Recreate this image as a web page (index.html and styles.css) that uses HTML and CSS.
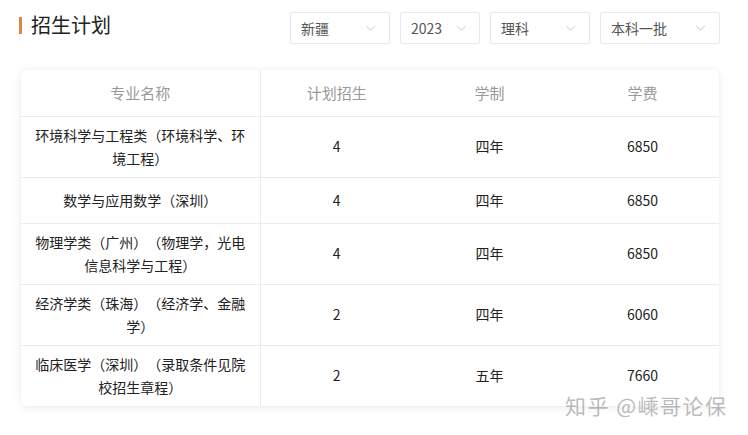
FILE: index.html
```html
<!DOCTYPE html>
<html lang="zh">
<head>
<meta charset="utf-8">
<link rel="stylesheet" href="styles.css">
</head>
<body>
<div class="page">
  <div class="topbar">
    <div class="title"><span class="bar"></span><span class="title-text">招生计划</span></div>
    <div class="filters">
      <div class="select w100"><span>新疆</span><svg class="arrow" viewBox="0 0 12 7"><path d="M1 1l5 5 5-5" fill="none" stroke="#bdbdbd" stroke-width="1"/></svg></div>
      <div class="select w80"><span>2023</span><svg class="arrow" viewBox="0 0 12 7"><path d="M1 1l5 5 5-5" fill="none" stroke="#bdbdbd" stroke-width="1"/></svg></div>
      <div class="select w100"><span>理科</span><svg class="arrow" viewBox="0 0 12 7"><path d="M1 1l5 5 5-5" fill="none" stroke="#bdbdbd" stroke-width="1"/></svg></div>
      <div class="select w120"><span>本科一批</span><svg class="arrow" viewBox="0 0 12 7"><path d="M1 1l5 5 5-5" fill="none" stroke="#bdbdbd" stroke-width="1"/></svg></div>
    </div>
  </div>
  <div class="card">
    <table class="plan">
      <thead>
        <tr><th class="c1">专业名称</th><th>计划招生</th><th>学制</th><th>学费</th></tr>
      </thead>
      <tbody>
        <tr><td class="c1">环境科学与工程类（环境科学、环境工程）</td><td>4</td><td>四年</td><td>6850</td></tr>
        <tr><td class="c1">数学与应用数学（深圳）</td><td>4</td><td>四年</td><td>6850</td></tr>
        <tr><td class="c1">物理学类（广州）（物理学，光电信息科学与工程）</td><td>4</td><td>四年</td><td>6850</td></tr>
        <tr><td class="c1">经济学类（珠海）（经济学、金融学）</td><td>2</td><td>四年</td><td>6060</td></tr>
        <tr><td class="c1">临床医学（深圳）（录取条件见院校招生章程）</td><td>2</td><td>五年</td><td>7660</td></tr>
      </tbody>
    </table>
  </div>
  <div class="watermark">知乎 @嵊哥论保</div>
</div>
</body>
</html>
```
FILE: styles.css
```css
html, body {
  margin: 0;
  padding: 0;
  background: #fff;
}
body {
  font-family: "Noto Sans CJK SC", "Noto Sans", sans-serif;
  color: #333;
  width: 748px;
  height: 435px;
  overflow: hidden;
  text-spacing-trim: space-all;
}
.page {
  position: relative;
  padding: 12px 28px 0 21px;
  height: 423px;
}
.topbar {
  display: flex;
  justify-content: space-between;
  align-items: flex-start;
  height: 32px;
}
.title {
  display: flex;
  align-items: center;
  margin-left: -2px;
  height: 26px;
}
.bar {
  width: 3px;
  height: 17px;
  background: #e2843c;
  margin-right: 9px;
}
.title-text {
  font-size: 20px;
  color: #222;
  line-height: 26px;
}
.filters {
  display: flex;
  gap: 10px;
}
.select {
  box-sizing: border-box;
  height: 32px;
  border: 1px solid #e9e9e9;
  border-radius: 2px;
  display: flex;
  align-items: center;
  justify-content: space-between;
  padding: 0 13px 0 10px;
  font-size: 14px;
  color: #555;
  box-shadow: 0 0 2px rgba(0,0,0,0.04);
}
.w100 { width: 100px; }
.w80 { width: 80px; padding-right: 12px; }
.w120 { width: 120px; }
.arrow {
  width: 11px;
  height: 6px;
}
.card {
  margin-top: 26px;
  width: 698px;
  background: #fff;
  border-radius: 6px;
  box-shadow: 0 1px 8px rgba(0,0,0,0.09);
  overflow: hidden;
}
.plan {
  width: 100%;
  border-collapse: collapse;
  table-layout: fixed;
}
.plan th, .plan td {
  text-align: center;
  vertical-align: middle;
  border-bottom: 1px solid #ebebeb;
  padding: 0 12px;
}
.plan th {
  height: 46px;
  font-size: 15px;
  font-weight: normal;
  color: #999;
  box-sizing: border-box;
}
.plan td {
  font-size: 14px;
  line-height: 23px;
  color: #222;
  height: 31px;
  padding-top: 7px;
  padding-bottom: 7px;
}
.plan tbody tr:last-child td {
  border-bottom: none;
}
.plan .c1 {
  width: 239px;
  box-sizing: border-box;
  border-right: 1px solid #ebebeb;
  padding: 7px 14px;
}
.plan th.c1 { padding: 0 14px; }
.watermark {
  position: absolute;
  left: 565px;
  top: 390px;
  font-size: 21px;
  color: rgba(120,120,120,0.5);
  letter-spacing: 1.5px;
}
```
